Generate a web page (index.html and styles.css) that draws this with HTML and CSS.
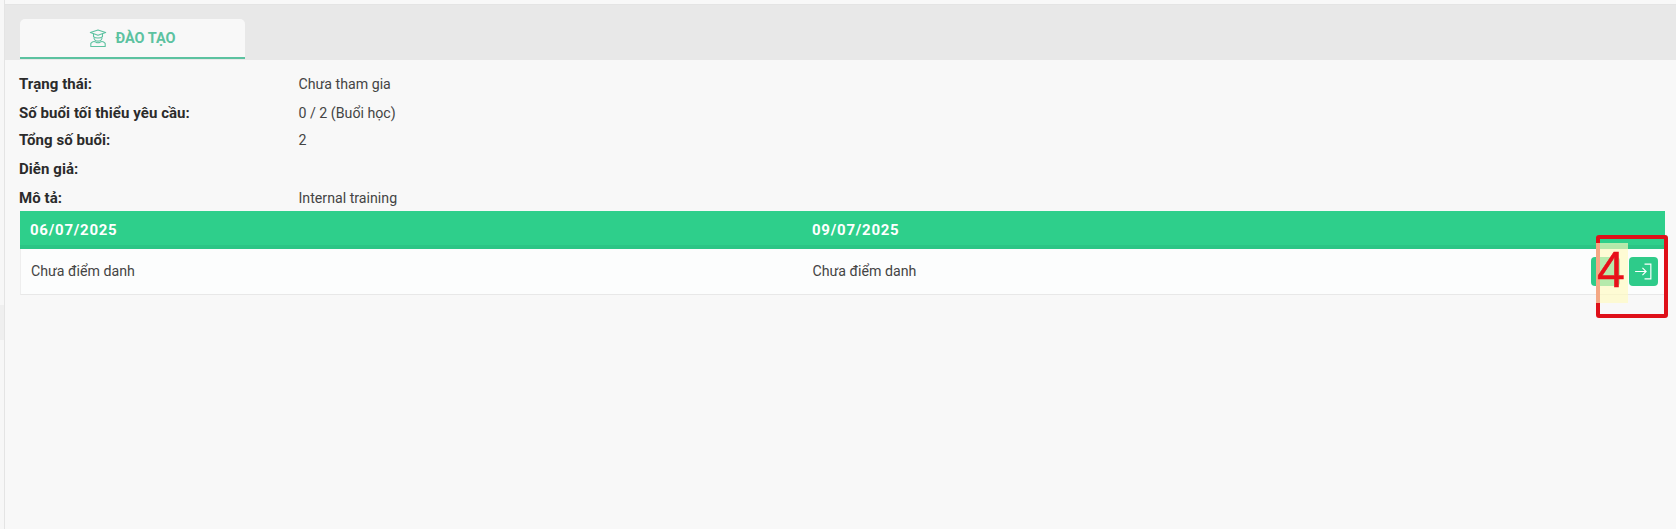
FILE: index.html
```html
<!DOCTYPE html>
<html lang="vi">
<head>
    <meta charset="UTF-8">
    <title>Đào tạo</title>
    <link rel="stylesheet" href="styles.css">
</head>
<body>
    <div class="page">
        <div class="side-strip"><div class="side-patch"></div></div>
        <div class="main">
            <div class="tab-bar">
                <div class="tab">
                    <svg class="tab-icon" viewBox="0 0 20 20" fill="none" stroke="currentColor" stroke-width="1.2" stroke-linejoin="round" stroke-linecap="round">
                        <path d="M10 1 L18.5 4 L10 7 L1.5 4 Z"/>
                        <path d="M5 5.5 V8.5 C7 10.5 13 10.5 15 8.5 V5.5"/>
                        <path d="M5.5 10 C6 12.5 8 13.5 10 13.5 C12 13.5 14 12.5 14.5 10"/>
                        <path d="M2 19.5 V16 C4 13.5 6 13.5 7.5 14.5 C9 15.5 11 15.5 12.5 14.5 C14 13.5 16 13.5 18 16 V19.5 Z"/>
                    </svg>
                    <span>ĐÀO TẠO</span>
                </div>
            </div>
            <div class="content">
                <div class="info-row row-1"><div class="info-label">Trạng thái:</div><div class="info-value">Chưa tham gia</div></div>
                <div class="info-row row-2"><div class="info-label">Số buổi tối thiểu yêu cầu:</div><div class="info-value">0 / 2 (Buổi học)</div></div>
                <div class="info-row row-3"><div class="info-label">Tổng số buổi:</div><div class="info-value">2</div></div>
                <div class="info-row row-4"><div class="info-label">Diễn giả:</div><div class="info-value"></div></div>
                <div class="info-row row-5"><div class="info-label">Mô tả:</div><div class="info-value">Internal training</div></div>

                <div class="session-table">
                    <div class="session-head">
                        <div class="session-col">06/07/2025</div>
                        <div class="session-col">09/07/2025</div>
                    </div>
                    <div class="session-body">
                        <div class="session-col">Chưa điểm danh</div>
                        <div class="session-col">Chưa điểm danh</div>
                        <div class="session-actions">
                            <button class="btn-action"></button>
                            <button class="btn-action">
                                <svg viewBox="0 0 20 20" fill="none" stroke="#fff" stroke-width="1.1">
                                    <path d="M2 10 H12.5 M9 6.5 L12.5 10 L9 13.5"/>
                                    <path d="M11 3 H17 V17 H11"/>
                                </svg>
                            </button>
                        </div>
                    </div>
                </div>
            </div>
        </div>
    </div>

    <div class="note-box"></div>
    <div class="note-mark"></div>
    <div class="note-num">4</div>
</body>
</html>
```

FILE: styles.css
```css
html, body {
    margin: 0;
    height: 100%;
}
body {
    font-family: Roboto, "Noto Sans", sans-serif;
    font-size: 14px;
    color: #333;
    background-color: #f8f8f8;
    overflow: hidden;
    position: relative;
}
.page {
    display: flex;
    height: 529px;
}
.side-strip {
    width: 5px;
    background-color: #f7f7f7;
    border-right: 1px solid #e4e4e4;
    box-sizing: border-box;
}
.side-patch {
    height: 35px;
    margin-top: 305px;
    background-color: #efefef;
}
.main {
    flex: 1;
    display: flex;
    flex-direction: column;
}

/* Tabs */
.tab-bar {
    height: 56px;
    margin-top: 4px;
    background-color: #e8e8e8;
    padding: 14px 0 0 15px;
    box-sizing: border-box;
    border-top: 1px solid #e4e4e4;
}
.tab {
    width: 225px;
    height: 40px;
    box-sizing: border-box;
    background-color: #f8f8f8;
    border-radius: 5px 5px 0 0;
    border-bottom: 2px solid #5cc2a0;
    color: #5cc2a0;
    font-size: 14.5px;
    font-weight: 700;
    display: flex;
    align-items: center;
    justify-content: center;
    gap: 8px;
}
.tab-icon {
    width: 18px;
    height: 20px;
}

/* Info rows */
.content {
    padding: 0 11px 0 14px;
    flex: 1;
}
.info-row {
    display: flex;
}
.row-1 { padding-top: 14px; }
.row-2 { padding-top: 8px; }
.row-3 { padding-top: 6px; }
.row-4 { padding-top: 8px; }
.row-5 { padding-top: 8px; }
.info-label {
    width: 279.5px;
    font-weight: 700;
    color: #2b2b2b;
    font-size: 15px;
    line-height: 21px;
    letter-spacing: 0.06px;
}
.info-value {
    color: #444;
    font-size: 14.2px;
    line-height: 20px;
}

/* Sessions */
.session-table {
    margin-top: 2px;
    margin-left: 1px;
    width: 1645px;
    border-bottom: 1px solid #e8e8e8;
    border-left: 1px solid #eeeeee;
    box-sizing: border-box;
}
.session-head {
    display: flex;
    height: 38px;
    margin-left: -1px;
    align-items: center;
    background-color: #2ecf8b;
    box-shadow: inset 0 -4px 0 #2bc585;
    color: #fff;
    font-weight: 700;
    font-size: 15px;
    letter-spacing: 0.75px;
}
.session-body {
    display: flex;
    height: 45px;
    align-items: center;
    background-color: #fcfdfd;
    color: #444;
    font-size: 14.2px;
}
.session-col {
    width: 782px;
    padding-left: 10px;
    box-sizing: border-box;
}
.session-body .session-col {
    width: 781.5px;
    margin-bottom: 2px;
}
.session-actions {
    margin-left: auto;
    display: flex;
    gap: 9px;
    padding-right: 7px;
}
.btn-action {
    width: 29px;
    height: 29px;
    padding: 4px;
    border: none;
    border-radius: 4px;
    background-color: #2ecb8a;
}
.btn-action svg {
    display: block;
    width: 21px;
    height: 21px;
}

/* Annotation drawn over the page */
.note-box {
    position: absolute;
    left: 1596px;
    top: 235px;
    width: 72px;
    height: 83px;
    box-sizing: border-box;
    border: 4px solid #df1019;
    border-radius: 3px;
}
.note-mark {
    position: absolute;
    left: 1596px;
    top: 243px;
    width: 32px;
    height: 60px;
    background-color: rgba(255, 250, 190, 0.65);
}
.note-num {
    position: absolute;
    left: 1597px;
    top: 245px;
    color: #e8101a;
    font-family: "Liberation Sans", sans-serif;
    font-size: 50px;
    line-height: 50px;
    -webkit-text-stroke: 0.5px #e8101a;
}
```
